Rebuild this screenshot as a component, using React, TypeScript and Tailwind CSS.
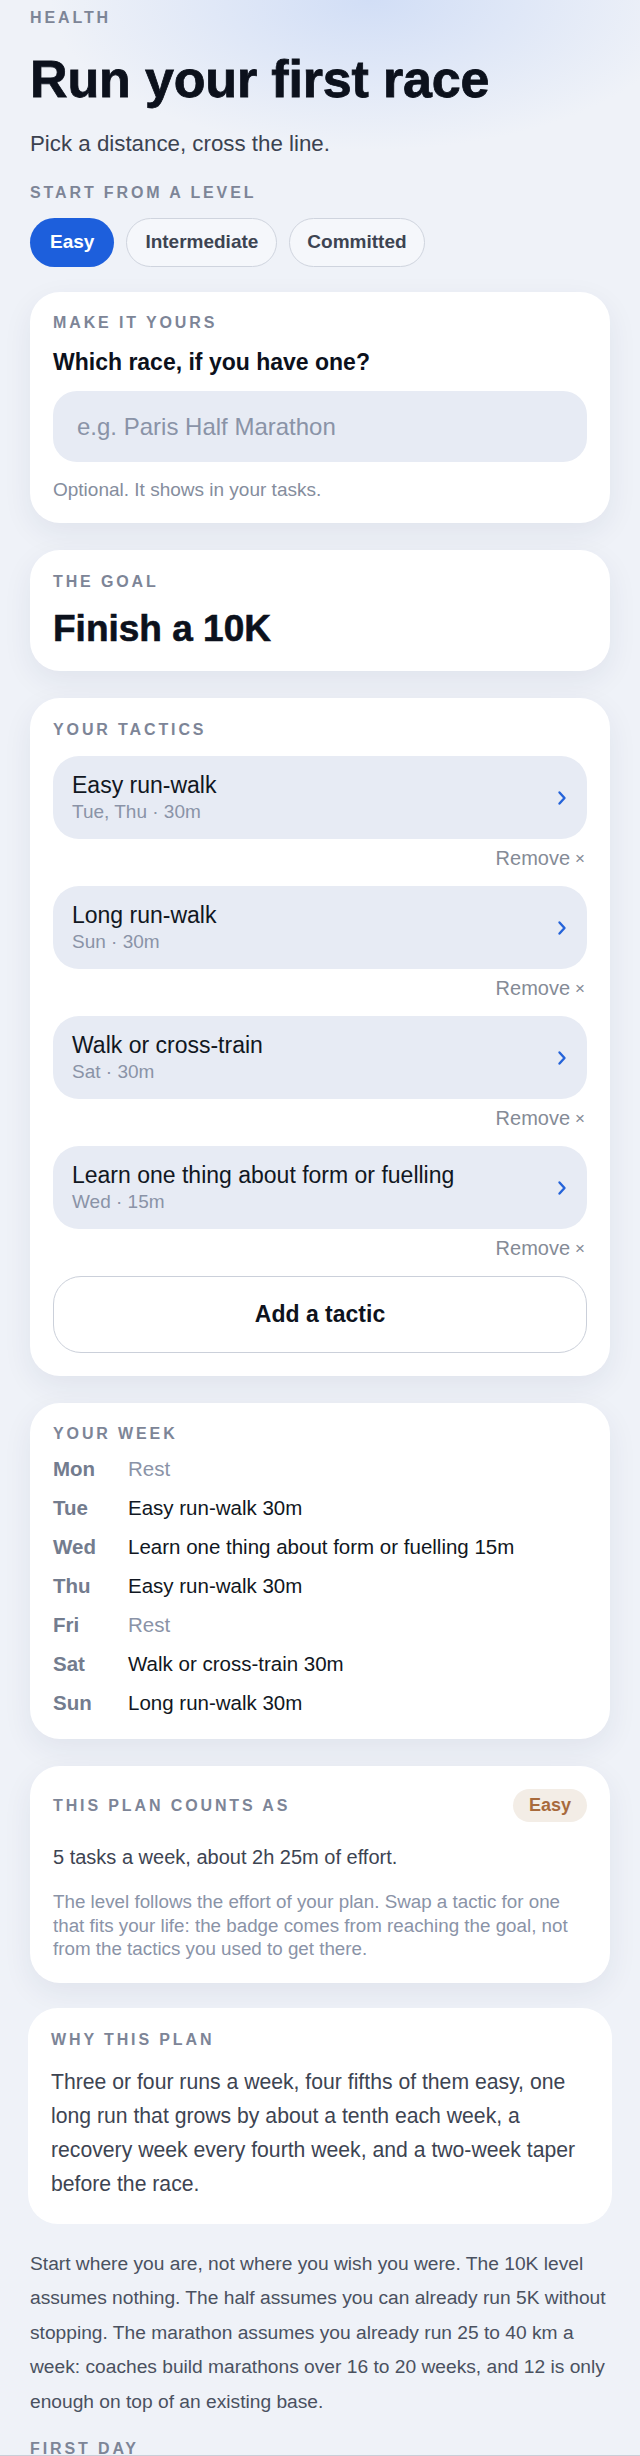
import React from 'react';

const tactics = [
  { name: 'Easy run-walk', meta: 'Tue, Thu · 30m' },
  { name: 'Long run-walk', meta: 'Sun · 30m' },
  { name: 'Walk or cross-train', meta: 'Sat · 30m' },
  { name: 'Learn one thing about form or fuelling', meta: 'Wed · 15m' },
];

const week = [
  { day: 'Mon', task: 'Rest', rest: true },
  { day: 'Tue', task: 'Easy run-walk 30m' },
  { day: 'Wed', task: 'Learn one thing about form or fuelling 15m' },
  { day: 'Thu', task: 'Easy run-walk 30m' },
  { day: 'Fri', task: 'Rest', rest: true },
  { day: 'Sat', task: 'Walk or cross-train 30m' },
  { day: 'Sun', task: 'Long run-walk 30m' },
];

function Label({ children }: { children: React.ReactNode }) {
  return (
    <div className="text-[16px] leading-[20px] font-bold uppercase tracking-[0.18em] text-[#7d8597]">
      {children}
    </div>
  );
}

function Chevron() {
  return (
    <svg width="10" height="16" viewBox="0 0 10 16" fill="none" className="shrink-0">
      <path d="M2.5 2.5 L7.5 8 L2.5 13.5" stroke="#2563d9" strokeWidth="2.4" strokeLinecap="round" strokeLinejoin="round" />
    </svg>
  );
}

const card = 'bg-white rounded-[30px] shadow-[0_10px_30px_rgba(30,45,80,0.07)]';

export default function App() {
  return (
    <div
      className="min-h-[2456px] bg-[#eff2f8] text-[#0c111c]"
      style={{
        fontFamily: '"Liberation Sans", Arial, sans-serif',
        backgroundImage:
          'radial-gradient(ellipse 320px 150px at 370px 0px, rgba(208,221,246,0.95), rgba(239,242,248,0) 100%)',
      }}
    >
      <div className="px-[30px] pt-[8px]">
        <Label>Health</Label>
        <h1 className="mt-[21px] text-[52px] leading-[60px] font-black tracking-[-0.003em] [-webkit-text-stroke:0.8px_#0c111c]">
          Run your first race
        </h1>
        <p className="mt-[21px] text-[22.3px] leading-[28px] text-[#3b4250]">Pick a distance, cross the line.</p>

        <div className="mt-[25px]">
          <Label>Start from a level</Label>
        </div>
        <div className="mt-[15px] flex gap-[12px]">
          <button className="h-[49px] px-[20px] rounded-full bg-[#1d5fdc] text-white text-[19px] font-bold">Easy</button>
          <button className="h-[49px] px-[18px] rounded-full border border-[#cfd4de] bg-white/40 text-[#3d4452] text-[19px] font-bold">
            Intermediate
          </button>
          <button className="h-[49px] px-[17px] rounded-full border border-[#cfd4de] bg-white/40 text-[#3d4452] text-[19px] font-bold">
            Committed
          </button>
        </div>

        <div className="mt-[25px] flex flex-col gap-[27px]">
          <section className={`${card} px-[23px] pt-[21px] pb-[21px]`}>
            <Label>Make it yours</Label>
            <div className="mt-[15px] text-[23px] leading-[28px] font-bold">Which race, if you have one?</div>
            <div className="mt-[15px] h-[71px] rounded-[24px] bg-[#e7ebf4] px-[24px] flex items-center text-[24px] text-[#8a93a7]">
              e.g. Paris Half Marathon
            </div>
            <div className="mt-[16px] text-[19px] leading-[24px] text-[#858d9d]">Optional. It shows in your tasks.</div>
          </section>

          <section className={`${card} px-[23px] pt-[22px] pb-[22px]`}>
            <Label>The goal</Label>
            <div className="mt-[17px] text-[37px] leading-[40px] font-black [-webkit-text-stroke:0.6px_#0c111c]">
              Finish a 10K
            </div>
          </section>

          <section className={`${card} px-[23px] pt-[22px] pb-[23px]`}>
            <Label>Your tactics</Label>
            <div className="mt-[16px] flex flex-col gap-[16px]">
              {tactics.map((t) => (
                <div key={t.name}>
                  <div className="h-[83px] rounded-[26px] bg-[#e7ebf4] pl-[19px] pr-[20px] flex items-center justify-between">
                    <div>
                      <div className="text-[23px] leading-[28px] text-[#111722]">{t.name}</div>
                      <div className="mt-px text-[19px] leading-[24px] text-[#8a93a7]">{t.meta}</div>
                    </div>
                    <Chevron />
                  </div>
                  <div className="mt-[7px] h-[24px] flex items-center justify-end gap-[5px] text-[20px] leading-none text-[#858b96] pr-[2px]">
                    <span>Remove</span>
                    <span className="text-[17px] leading-none">×</span>
                  </div>
                </div>
              ))}
              <button className="h-[77px] rounded-[28px] border-[1.5px] border-[#cbd0da] bg-white text-[23px] font-bold text-[#0e131d]">
                Add a tactic
              </button>
            </div>
          </section>

          <section className={`${card} px-[23px] pt-[21px] pb-[17px]`}>
            <Label>Your week</Label>
            <div className="mt-[5px]">
              {week.map((w) => (
                <div key={w.day} className="flex text-[20.5px] leading-[39px]">
                  <span className="w-[75px] font-bold text-[#737c8e]">{w.day}</span>
                  <span className={w.rest ? 'text-[#8a93a7]' : 'text-[#111722]'}>{w.task}</span>
                </div>
              ))}
            </div>
          </section>

          <section className={`${card} px-[23px] pt-[23px] pb-[22px]`}>
            <div className="flex items-center justify-between">
              <Label>This plan counts as</Label>
              <span className="h-[33px] px-[16px] rounded-full bg-[#f3ede6] text-[#a86a3c] text-[18px] font-bold flex items-center">
                Easy
              </span>
            </div>
            <div className="mt-[22px] text-[20px] leading-[26px] text-[#3d4452]">5 tasks a week, about 2h 25m of effort.</div>
            <p className="mt-[20px] text-[18.8px] leading-[23.5px] text-[#8a93a7]">
              The level follows the effort of your plan. Swap a tactic for one that fits your life: the badge comes from
              reaching the goal, not from the tactics you used to get there.
            </p>
          </section>

          <section className="-mx-[2px] -mt-[2px] bg-white rounded-[30px] px-[23px] pt-[22px] pb-[23px]">
            <Label>Why this plan</Label>
            <p className="mt-[15px] text-[21.2px] leading-[34px] text-[#3d4452]">
              Three or four runs a week, four fifths of them easy, one long run that grows by about a tenth each week, a
              recovery week every fourth week, and a two-week taper before the race.
            </p>
          </section>
        </div>

        <p className="mt-[23px] text-[19.2px] leading-[34.5px] text-[#4a5160]">
          Start where you are, not where you wish you were. The 10K level assumes nothing. The half assumes you can
          already run 5K without stopping. The marathon assumes you already run 25 to 40 km a week: coaches build
          marathons over 16 to 20 weeks, and 12 is only enough on top of an existing base.
        </p>

        <div className="mt-[20px]">
          <Label>First day</Label>
        </div>
      </div>

      <div className="fixed left-0 right-0 bottom-0 h-px bg-[#c9ced8]" />
    </div>
  );
}
